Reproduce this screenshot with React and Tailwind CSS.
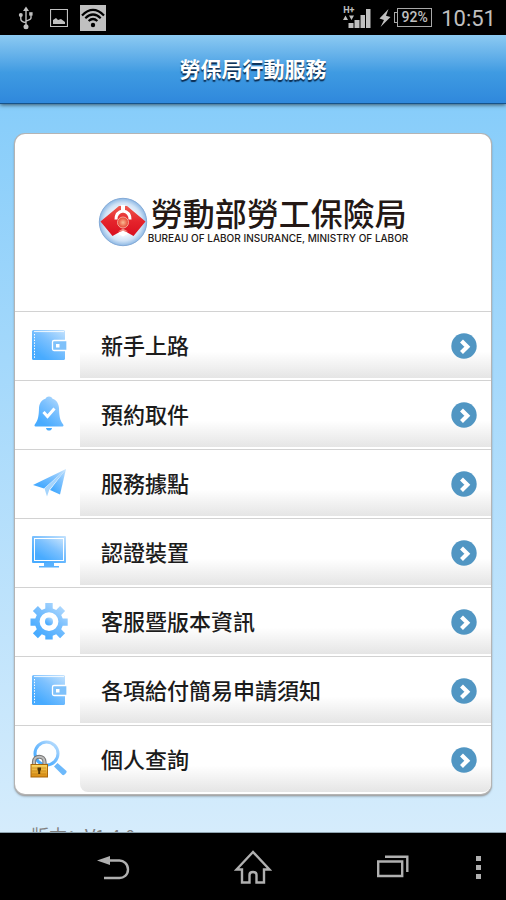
const menuItems = [
  { label: '新手上路', icon: WalletIcon },
  { label: '預約取件', icon: BellIcon },
  { label: '服務據點', icon: PlaneIcon },
  { label: '認證裝置', icon: MonitorIcon },
  { label: '客服暨版本資訊', icon: GearIcon },
  { label: '各項給付簡易申請須知', icon: WalletIcon },
  { label: '個人查詢', icon: SearchLockIcon },
];

// Shared gradients, referenced by id from the icons below
function IconGradients() {
  return (
    <svg width="0" height="0" className="absolute" aria-hidden="true">
      <defs>
        <linearGradient id="blue" x1="1" y1="0" x2="0.3" y2="0.9">
          <stop offset="0" stopColor="#c4e2fd" />
          <stop offset="0.5" stopColor="#7dc1fe" />
          <stop offset="1" stopColor="#48abff" />
        </linearGradient>
        <linearGradient id="brass" x1="0" y1="0" x2="0" y2="1">
          <stop offset="0" stopColor="#fbd865" />
          <stop offset="1" stopColor="#d98a10" />
        </linearGradient>
      </defs>
    </svg>
  );
}

function WalletIcon() {
  return (
    <svg width="38" height="38" viewBox="0 0 38 38" aria-hidden="true">
      <rect x="2" y="4" width="33" height="30" rx="1.5" fill="url(#blue)" />
      <path d="M4 5.5h30" stroke="#fff" strokeWidth="1.2" opacity="0.8" />
      <path d="M4.5 8v25" stroke="#fff" strokeWidth="1" strokeDasharray="1.4 1.4" />
      <path d="M37 14.5H24a1.5 1.5 0 0 0-1.5 1.5v7a1.5 1.5 0 0 0 1.5 1.5h13z" fill="#7fc1fa" stroke="#fff" strokeWidth="1.3" />
      <rect x="26" y="18" width="3.5" height="3.5" fill="#fff" />
    </svg>
  );
}

function BellIcon() {
  return (
    <svg width="38" height="38" viewBox="0 0 38 38" aria-hidden="true">
      <path d="M19 1.5c-2 0-3.2 1-3.5 2.3C11.5 5 9.3 8.5 9 13c-.2 7-.6 12-4.2 16.5-.6.8-.4 2 .8 2h26.8c1.2 0 1.4-1.2.8-2C29.6 25 29.2 20 29 13c-.3-4.5-2.5-8-6.5-9.2C22.2 2.5 21 1.5 19 1.5z" fill="url(#blue)" />
      <path d="M16 33h6c0 1.5-1.3 2.6-3 2.6S16 34.5 16 33z" fill="#48abff" />
      <path d="M13.5 17l4 4.5 7-8" fill="none" stroke="#fff" strokeWidth="3" />
    </svg>
  );
}

function PlaneIcon() {
  return (
    <svg width="38" height="38" viewBox="0 0 38 38" aria-hidden="true">
      <path d="M36 5L3 21l11 3.5z" fill="url(#blue)" />
      <path d="M36 5L20 26l10 4.5z" fill="url(#blue)" />
      <path d="M36 5L14.5 24.5l2.5 8 2.2-6.5z" fill="#a5d4fc" />
    </svg>
  );
}

function MonitorIcon() {
  return (
    <svg width="38" height="38" viewBox="0 0 38 38" aria-hidden="true">
      <rect x="2" y="3" width="34" height="27" rx="1" fill="url(#blue)" />
      <rect x="4.5" y="5.5" width="29" height="22" fill="url(#blue)" stroke="#fff" strokeWidth="1" />
      <path d="M14 30h10v3h5v1.5H9V33h5z" fill="#59b2fe" />
    </svg>
  );
}

function GearIcon() {
  return (
    <svg width="38" height="38" viewBox="0 0 38 38" aria-hidden="true">
      <g fill="url(#blue)">
        <path
          fillRule="evenodd"
          d="M15.3 1h7.4v5.4l3.5 1.500 3.900-3.900 5 5-3.900 3.900 1.500 3.500h5v7.400h-5l-1.500 3.500 3.900 3.900-5 5-3.900-3.900-3.500 1.500v3.700h-7.400v-3.700l-3.500-1.500-3.900 3.900-5-5 3.900-3.900-1.500-3.500H.5v-7.400h4.800l1.500-3.500L2.900 9l5-5 3.900 3.900 3.500-1.500zM19 10.200a9.400 9.400 0 1 0 0 18.800 9.400 9.400 0 0 0 0-18.800z"
        />
        <circle cx="19" cy="19.6" r="4" />
      </g>
    </svg>
  );
}

function SearchLockIcon() {
  return (
    <svg width="38" height="38" viewBox="0 0 38 38" aria-hidden="true">
      <circle cx="16.5" cy="13.5" r="11.5" fill="#fdfeff" stroke="url(#blue)" strokeWidth="3" />
      <path d="M24 26.5l3.5-3.5 9 8c.8.8-2 5-4 4z" fill="#6db9fb" />
      <path d="M4 25v-3c0-7 10.5-7 10.5 0v3" fill="none" stroke="#777" strokeWidth="4.2" />
      <path d="M4 25v-3c0-7 10.5-7 10.5 0v3" fill="none" stroke="#bdbdbd" strokeWidth="2.2" />
      <rect x="1" y="24.5" width="16.5" height="12.5" fill="url(#brass)" stroke="#a9660a" />
      <path d="M2 28h14M2 31h14M2 34h14" stroke="#b97a12" strokeWidth="0.8" opacity="0.7" />
      <path d="M7.5 27.5H11V30l-.8 1v3h-2v-3l-.7-1z" fill="#4e3305" />
    </svg>
  );
}

function ArrowBadge() {
  return (
    <svg width="26" height="26" viewBox="0 0 26 26" className="shrink-0" aria-hidden="true">
      <circle cx="13" cy="13" r="12.7" fill="#5196c3" />
      <path d="M10.5 8l5.8 5.700-5.800 5.700" fill="none" stroke="#fff" strokeWidth="4.2" />
    </svg>
  );
}

function BureauEmblem() {
  return (
    <svg width="50" height="50" viewBox="0 0 50 50" className="shrink-0" aria-hidden="true">
      <defs>
        <radialGradient id="disc">
          <stop offset="0.45" stopColor="#fff" />
          <stop offset="0.8" stopColor="#cfe2f6" />
          <stop offset="1" stopColor="#8db8e4" />
        </radialGradient>
        <linearGradient id="redWing" x1="0" y1="0" x2="0" y2="1">
          <stop offset="0" stopColor="#ee5a50" />
          <stop offset="0.5" stopColor="#e5242c" />
          <stop offset="1" stopColor="#d90f1f" />
        </linearGradient>
        <radialGradient id="core">
          <stop offset="0" stopColor="#f9bb92" />
          <stop offset="1" stopColor="#e6402f" />
        </radialGradient>
      </defs>
      <circle cx="25" cy="25" r="23.7" fill="url(#disc)" stroke="#83a9d6" strokeWidth="1" />
      <path d="M21 9L2.5 24.500 14.500 39l8-4.500h5l8 4.500 12-14.500L29 9z" fill="url(#redWing)" />
      {/* white figure with raised arms around the core */}
      <path d="M23 8h4v5.500h-4z" fill="#fff" />
      <path d="M18 22.500q0-7.500 7-8.500 7 1 7 8.500" fill="none" stroke="#fff" strokeWidth="3" />
      <path d="M20 34.500h10L25 31.500z" fill="#f28d80" />
      <path d="M20 36.500l5-3 5 3-5 3z" fill="#fff" />
      <circle cx="25" cy="25.500" r="5.500" fill="url(#core)" stroke="#f7c3b0" strokeWidth="0.8" />
    </svg>
  );
}

function StatusBar() {
  return (
    <div className="flex h-[35px] shrink-0 items-center justify-between bg-black pr-[10px] pl-[18px] text-[#c0c0c0]">
      <div className="flex items-center gap-[17px]">
        <svg width="15" height="24" viewBox="0 0 15 24" fill="none" stroke="currentColor" strokeWidth="1.4" aria-label="USB">
          <path d="M8 4v17M2.8 9v4c0 2 1.2 3 5 3.5M13 8v4c0 1.5-1.400 2-5 3" />
          <path d="M8 .5L5 5h6z" fill="currentColor" stroke="none" />
          <circle cx="8" cy="20.8" r="2.5" fill="currentColor" stroke="none" />
          <circle cx="2.8" cy="9" r="2" fill="currentColor" stroke="none" />
          <path d="M11.2 6.200h3.400v3.400h-3.400z" fill="currentColor" stroke="none" />
        </svg>
        <svg width="18" height="18" viewBox="0 0 18 18" aria-label="Picture">
          <path d="M.5.5h17v17H.5z" fill="none" stroke="currentColor" strokeWidth="1.2" />
          <path d="M3 15v-4l3-2 2 2 3-1 4 3v2z" fill="currentColor" />
        </svg>
        <svg width="26" height="26" viewBox="0 0 26 26" className="-ml-[5px]" aria-label="Wi-Fi">
          <path d="M0 0h26v26H0z" fill="currentColor" />
          <g fill="none" stroke="#000" strokeWidth="2.2">
            <path d="M2 10.5Q13-.5 24 10.5" />
            <path d="M5.3 13.2q7.700-7.400 15.400 0" />
            <path d="M8.6 16q4.400-4 8.800 0" />
          </g>
          <circle cx="13" cy="20" r="2.2" />
        </svg>
      </div>
      <div className="flex items-center">
        <div className="relative">
          <svg width="28" height="23" viewBox="0 0 28 23" fill="currentColor" className="block" aria-label="Signal">
            <path d="M0 14l2.5-4.500L5 14zM6 9.500h5L8.500 14zM5.500 17h5v5h-5zM11.500 14h5v8h-5zM17.500 9h4.500v13h-4.500zM23 3h4.500v19H23z" />
          </svg>
          <span className="absolute -top-[1px] left-0 font-['Roboto',sans-serif] text-[9px] leading-[10px] font-bold">H+</span>
        </div>
        <svg width="12" height="18" viewBox="0 0 12 18" className="ml-2" fill="currentColor" aria-label="Charging">
          <path d="M9.5 0L.5 9.500 5 11l-3.500 7L11.500 8 7 6.800z" />
        </svg>
        <div className="ml-[3px] h-[11px] w-[3px] border-y border-l border-[#a8a8a8]" />
        <div className="flex h-[19px] w-[35px] items-center justify-center border border-[#a8a8a8] font-['Roboto',sans-serif] text-[14px] font-medium">
          92%
        </div>
        <div className="ml-[9px] pt-[2px] font-['Roboto',sans-serif] text-[22px] leading-[33px]">10:51</div>
      </div>
    </div>
  );
}

function MenuRow({ item }) {
  const Icon = item.icon;
  return (
    <li className="group border-t border-[#d2d2d2]">
      <a href="#" className="flex h-[68px] pb-[2px]">
        <span className="flex w-[65px] shrink-0 items-center justify-center pl-[2px]">
          <Icon />
        </span>
        <span className="flex flex-1 items-center justify-between bg-linear-to-b from-white from-60% to-[#e5e5e5] pt-[1px] pr-[14px] pl-[21px] group-last:rounded-b-[8px]">
          <span className="pb-[3px] text-[22px] leading-[30px] font-medium whitespace-nowrap text-[#1c1c1c]">{item.label}</span>
          <ArrowBadge />
        </span>
      </a>
    </li>
  );
}

function NavBar() {
  return (
    <nav className="flex h-[67px] shrink-0 items-center bg-black pr-[22px] pl-[96px] text-[#b0b0b0]">
      <div className="flex flex-1 items-center justify-between">
        <button type="button" aria-label="Back">
          <svg width="34" height="34" viewBox="0 0 34 34" fill="none" stroke="currentColor" strokeWidth="2.4">
            <path d="M12 10.5h11.500c4 0 8.500 3.500 8.500 9s-4.500 8.500-8.500 8.500H8" />
            <path d="M1 10.5l13-4.500v9z" fill="currentColor" stroke="none" />
          </svg>
        </button>
        <button type="button" aria-label="Home">
          <svg width="38" height="38" viewBox="0 0 38 38" fill="none" stroke="currentColor" strokeWidth="2.4">
            <path d="M19 4L2.500 21.500H8v13h7.500V27q0-3 3.500-3t3.500 3v7.500H30v-13h5.500z" />
          </svg>
        </button>
        <button type="button" aria-label="Recent apps">
          <svg width="34" height="34" viewBox="0 0 34 34" fill="none" stroke="currentColor" strokeWidth="2.4">
            <path d="M2.2 11.500h24v14.500h-24z" />
            <path d="M9 6.800h22.300V22" />
          </svg>
        </button>
      </div>
      <button type="button" aria-label="More" className="ml-16">
        <svg width="10" height="34" viewBox="0 0 10 34" fill="currentColor">
          <path d="M2 6h5v5H2zM2 15h5v5H2zM2 24h5v5H2z" />
        </svg>
      </button>
    </nav>
  );
}

export default function App() {
  return (
    <div className="flex h-screen flex-col overflow-hidden bg-black font-['Noto_Sans_CJK_TC',sans-serif]">
      <IconGradients />
      <StatusBar />
      <header className="z-10 flex h-[69px] shrink-0 items-center justify-center border-b border-[#16538a] bg-linear-to-b from-[#8ccaf2] via-[#3f9be2] via-55% to-[#2f88dc] pb-[2px] shadow-[0_1px_4px_rgba(0,0,0,0.6)]">
        <h1 className="text-[21px] leading-[30px] font-bold text-white [text-shadow:0_2px_1px_#0b2c50]">勞保局行動服務</h1>
      </header>
      <main className="min-h-0 flex-1 overflow-hidden border-b border-[#8fa4b0] bg-linear-to-b from-[#87cdfa] to-[#d5ecfc] px-[15px] pt-[30px]">
        <div className="overflow-hidden rounded-[10px] bg-white shadow-[0_0_0_1px_#b4b4b4,0_1px_1px_1px_#a8a8a8,0_2px_3px_rgba(0,0,0,0.4)]">
          <div className="flex h-[177px] items-center justify-center pb-[2px]">
            <BureauEmblem />
            <div className="text-[#231815]">
              <div className="pl-[3px] text-[32px] leading-[26px] font-medium whitespace-nowrap">勞動部勞工保險局</div>
              <div className="mt-[7px] font-['Inter',sans-serif] text-[10px] leading-[12px] font-medium whitespace-nowrap">
                BUREAU OF LABOR INSURANCE, MINISTRY OF LABOR
              </div>
            </div>
          </div>
          <ul>
            {menuItems.map(item => (
              <MenuRow key={item.label} item={item} />
            ))}
          </ul>
        </div>
        <p className="mt-[28px] pl-4 font-['Noto_Sans_CJK_SC',sans-serif] text-[18px] leading-[26px] whitespace-nowrap text-[#808080]">版本：V1.4.0</p>
      </main>
      <NavBar />
    </div>
  );
}
